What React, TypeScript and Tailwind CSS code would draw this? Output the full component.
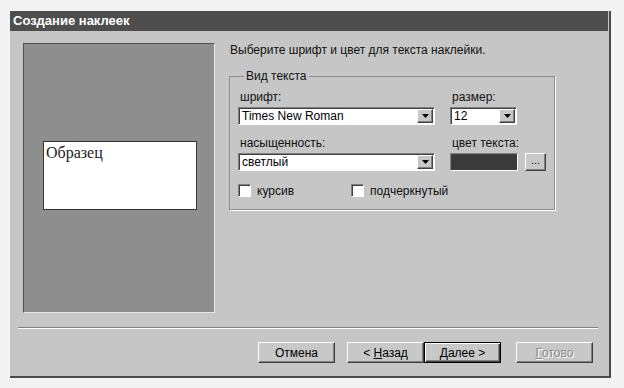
import React from 'react';

const raised =
  'border border-t-white border-l-white border-r-[#404040] border-b-[#404040] shadow-[inset_-1px_-1px_0_#808080] bg-[#c8c8c8]';
const sunken =
  'border border-t-[#808080] border-l-[#808080] border-r-white border-b-white shadow-[inset_1px_1px_0_#404040]';

const Combo: React.FC<{ value: string; width: string }> = ({ value, width }) => (
  <div className={`${sunken} ${width} h-[18px] bg-white flex items-center`}>
    <span className="flex-1 pl-[3px] leading-none text-black">{value}</span>
    <div className={`${raised} w-[16px] h-[14px] mr-[1px] flex items-center justify-center`}>
      <svg width="7" height="4" viewBox="0 0 7 4">
        <polygon points="0,0 7,0 3.5,4" fill="#000" />
      </svg>
    </div>
  </div>
);

const Check: React.FC<{ label: string; width?: string }> = ({ label, width }) => (
  <div className={`flex items-center gap-[6px] ${width ?? ''}`}>
    <div className={`${sunken} w-[13px] h-[13px] bg-white`} />
    <span className="leading-none">{label}</span>
  </div>
);

const Button: React.FC<{ children: React.ReactNode; className?: string; def?: boolean; disabled?: boolean }> = ({
  children,
  className,
  def,
  disabled,
}) => (
  <div
    className={`h-[21px] w-[77px] flex items-center justify-center leading-none bg-[#c8c8c8] ${
      def
        ? 'border border-black shadow-[inset_1px_1px_0_#fff,inset_-1px_-1px_0_#404040,inset_-2px_-2px_0_#808080]'
        : raised
    } ${disabled ? 'text-[#8a8a8a] [text-shadow:1px_1px_0_#fff]' : 'text-black'} ${className ?? ''}`}
  >
    {children}
  </div>
);

export default function App() {
  return (
    <div className="w-[624px] h-[388px] bg-[#f3f3f3] pl-[10px] pt-[11px] font-['Liberation_Sans',Arial,sans-serif] text-[12px] text-[#111]">
      <div className="w-[601px] h-[367px] bg-[#c6c6c6] border-r-2 border-b-2 border-[#4a4a4a] flex flex-col">
        {/* Title bar */}
        <div className="h-[20px] mr-[1px] bg-[#4e4e4e] text-white font-bold text-[13px] pl-[3px] flex items-center">
          Создание наклеек
        </div>

        {/* Main area */}
        <div className="flex pl-[13px] pt-[12px] gap-[14px]">
          {/* Preview */}
          <div className="w-[192px] h-[270px] bg-[#8e8e8e] border border-t-[#505050] border-l-[#505050] border-r-[#e8e8e8] border-b-[#e8e8e8] pl-[19px] pt-[97px]">
            <div className="w-[154px] h-[69px] bg-white border border-[#333] pl-[2px] pt-[2px] font-['Liberation_Serif','Times_New_Roman',serif] text-[16px] leading-[18px] text-[#222]">
              Образец
            </div>
          </div>

          {/* Settings */}
          <div className="w-[326px] flex flex-col">
            <p className="h-[14px] leading-[14px] pl-[1px]">Выберите шрифт и цвет для текста наклейки.</p>
            <fieldset className="mt-[12px] border border-[#8c8c8c] shadow-[1px_1px_0_#fff] pl-[8px] pb-[12px]">
              <legend className="ml-[6px] px-[2px] leading-[14px]">Вид текста</legend>
              <div className="grid grid-cols-[197px_auto] gap-x-[15px] pt-[7px]">
                <span className="pl-[2px] leading-[14px]">шрифт:</span>
                <span className="pl-[2px] leading-[14px]">размер:</span>
                <div className="mt-[3px]">
                  <Combo value="Times New Roman" width="w-[197px]" />
                </div>
                <div className="mt-[3px]">
                  <Combo value="12" width="w-[67px]" />
                </div>
                <span className="pl-[2px] leading-[14px] mt-[11px]">насыщенность:</span>
                <span className="pl-[2px] leading-[14px] mt-[11px]">цвет текста:</span>
                <div className="mt-[3px]">
                  <Combo value="светлый" width="w-[197px]" />
                </div>
                <div className="mt-[3px] flex items-center gap-[7px]">
                  <div className={`${sunken} w-[68px] h-[18px] bg-[#3a3a3a]`} />
                  <div className={`${raised} w-[21px] h-[18px] flex items-end justify-center pb-[4px] leading-none text-[11px]`}>
                    ...
                  </div>
                </div>
              </div>
              <div className="flex mt-[13px]">
                <Check label="курсив" width="w-[113px]" />
                <Check label="подчеркнутый" />
              </div>
            </fieldset>
          </div>
        </div>

        {/* Separator */}
        <div className="mt-[14px] ml-[8px] w-[580px] border-t border-t-[#808080] border-b border-b-white" />

        {/* Buttons */}
        <div className="flex mt-[13px] pl-[248px]">
          <Button>Отмена</Button>
          <Button className="ml-[12px]">
            &lt;&nbsp;<span className="underline">Н</span>азад
          </Button>
          <Button def>
            <span className="underline">Д</span>алее&nbsp;&gt;
          </Button>
          <Button disabled className="ml-[15px]">
            <span className="underline">Г</span>отово
          </Button>
        </div>
      </div>
    </div>
  );
}
